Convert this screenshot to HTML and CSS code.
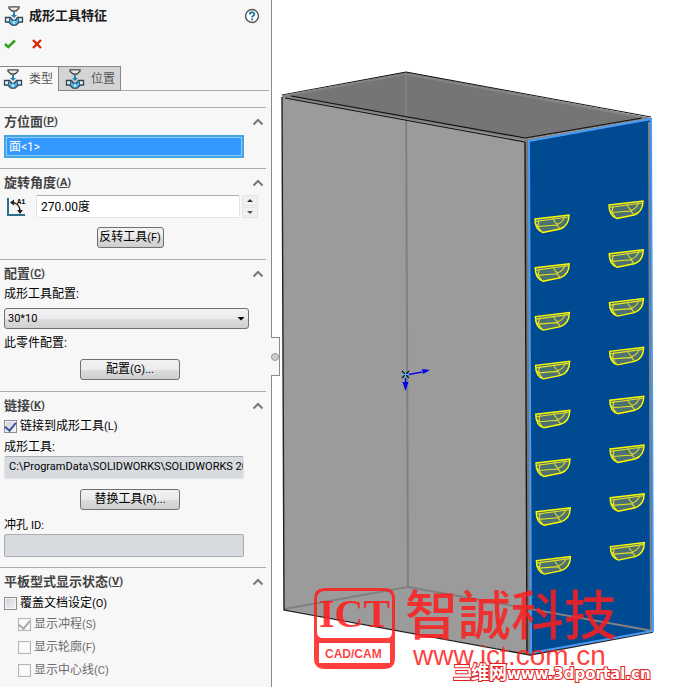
FILE: index.html
```
<!DOCTYPE html>
<html lang="zh-CN">

  <head>
    <meta charset="UTF-8" />
    <title>成形工具特征</title>

    <!-- CSS Styling -->
    <link rel="stylesheet" href="styles.css">
  </head>

  <body>

  <!-- Shared icons -->
  <svg class="defs" aria-hidden="true">
    <symbol id="form-tool" viewBox="0 0 20 20">
      <path d="M5 .8h10v1.400L12 5H8L5 2.200z" fill="#e8e8e8" stroke="#4a4a4a" stroke-width="1.300" />
      <path d="M9 6h2v3h2l-3 3-3-3h2z" fill="#2580ad" />
      <path d="M1.500 11.500h5l2.500 3h2l2.500-3h5v4.500h-3l-3.500 3h-4l-3.500-3h-3z" fill="#e4eef3" stroke="#34464f" stroke-width="1.300" />
      <path d="M5.500 12.500l3 2h3l3-2v3.500l-3 3h-3l-3-3z" fill="#5ab6e2" stroke="#1d6a92" />
      <path d="M9 15h2v3H9z" fill="#b9e2f6" />
    </symbol>
    <symbol id="chevron" viewBox="0 0 12 8">
      <path d="M1.500 6.500L6 2l4.500 4.500" fill="none" stroke="#777" stroke-width="2" />
    </symbol>
  </svg>

  <main class="app">
  <aside class="panel">
    <header class="title-row">
      <svg class="tool-icon"><use href="#form-tool" /></svg>
      <h1>成形工具特征</h1>
      <button class="icon-btn" type="button" aria-label="帮助">
        <svg width="16" height="16" viewBox="0 0 16 16">
          <circle cx="8" cy="8" r="6.500" fill="#fff" stroke="#555" stroke-width="1.400" />
          <path d="M5.800 6.500c0-3 4.500-2.800 4.500-.3 0 1.600-2.200 1.500-2.200 3.200M8.100 10.500v1.700" fill="none" stroke="#2378a5" stroke-width="1.900" />
        </svg>
      </button>
    </header>

    <div class="actions">
      <button class="icon-btn" type="button" aria-label="确定">
        <svg width="12" height="10" viewBox="0 0 12 10"><path d="M1 5l3.200 3L11 1.500" fill="none" stroke="#35a01f" stroke-width="2.500" /></svg>
      </button>
      <button class="icon-btn" type="button" aria-label="取消">
        <svg width="10" height="10" viewBox="0 0 10 10"><path d="M1 1l8 8M9 1L1 9" fill="none" stroke="#dc2000" stroke-width="2.300" /></svg>
      </button>
    </div>

    <nav class="tabs">
      <button class="tab active" type="button"><svg class="tool-icon"><use href="#form-tool" /></svg>类型</button>
      <button class="tab" type="button"><svg class="tool-icon"><use href="#form-tool" /></svg>位置</button>
    </nav>

    <!-- Placement face -->
    <section class="group face">
      <h2>方位面<span class="key">(<u>P</u>)</span><svg class="chevron"><use href="#chevron" /></svg></h2>
      <input class="field selected" type="text" value="面&lt;1&gt;" aria-label="方位面" readonly />
    </section>

    <!-- Rotation angle -->
    <section class="group angle">
      <h2>旋转角度<span class="key">(<u>A</u>)</span><svg class="chevron"><use href="#chevron" /></svg></h2>
      <div class="angle-row">
        <svg width="20" height="20" viewBox="0 0 20 20">
          <path d="M2 1v17h17" fill="none" stroke="#2c6f90" stroke-width="2" />
          <path d="M5 5.500c5 0 9 3 9 9" fill="none" stroke="#222" stroke-width="1.500" />
          <path d="M4 5.500l4-3v6zM14 17l-3-4h6z" fill="#222" />
          <text x="11" y="7" class="icon-text">A1</text>
        </svg>
        <input class="field" type="text" value="270.00度" aria-label="旋转角度" />
        <div class="spin">
          <button type="button" aria-label="增加"><svg width="6" height="3" viewBox="0 0 6 3"><path d="M0 3l3-3 3 3z" fill="#333" /></svg></button>
          <button type="button" aria-label="减少"><svg width="6" height="3" viewBox="0 0 6 3"><path d="M0 0l3 3 3-3z" fill="#555" /></svg></button>
        </div>
      </div>
      <button class="btn short" type="button">反转工具<span class="key">(F)</span></button>
    </section>

    <!-- Configuration -->
    <section class="group config">
      <h2>配置<span class="key">(<u>C</u>)</span><svg class="chevron"><use href="#chevron" /></svg></h2>
      <label for="toolConfig">成形工具配置:</label>
      <div class="select">
        <select id="toolConfig">
          <option>30*10</option>
        </select>
      </div>
      <p>此零件配置:</p>
      <button class="btn" type="button">配置<span class="key">(G)...</span></button>
    </section>

    <!-- Link -->
    <section class="group link">
      <h2>链接<span class="key">(<u>K</u>)</span><svg class="chevron"><use href="#chevron" /></svg></h2>
      <label class="check"><input type="checkbox" checked /><span>链接到成形工具<span class="key">(L)</span></span></label>
      <label for="toolPath">成形工具:</label>
      <input class="field gray" type="text" id="toolPath" value="C:\ProgramData\SOLIDWORKS\SOLIDWORKS 2016" readonly />
      <button class="btn" type="button">替换工具<span class="key">(R)...</span></button>
      <label for="punchId">冲孔 <span class="key">ID:</span></label>
      <input class="field gray framed" type="text" id="punchId" readonly />
    </section>

    <!-- Flat pattern display -->
    <section class="group display">
      <h2>平板型式显示状态<span class="key">(<u>V</u>)</span><svg class="chevron"><use href="#chevron" /></svg></h2>
      <label class="check"><input type="checkbox" /><span>覆盖文档设定<span class="key">(O)</span></span></label>
      <div class="sub-list">
        <label class="check"><input type="checkbox" checked disabled /><span>显示冲程<span class="key">(S)</span></span></label>
        <label class="check"><input type="checkbox" disabled /><span>显示轮廓<span class="key">(F)</span></span></label>
        <label class="check"><input type="checkbox" disabled /><span>显示中心线<span class="key">(C)</span></span></label>
      </div>
    </section>

    <button class="splitter" type="button" aria-label="折叠面板"></button>
  </aside>

  <section class="viewport">
    <svg class="model" viewBox="272 0 401 687">
      <defs>
        <g id="louver">
          <path d="M0 4L34 0C34 7 31 12 25 14L8 17.500C3 16 0 11 0 4z" fill="#4d7170" stroke="#ff0" stroke-width="1.400" />
          <path d="M0 6.500L33 2M4 5L3 11.500L22 10L25 14M3 11.500L7 17M0 8l3 3.500" fill="none" stroke="#e4e428" stroke-width="1.100" />
          <path d="M18 3q2 6 5 6q5-2 7-8M23 9l-1 1" fill="none" stroke="#d0d030" stroke-width="1.200" />
        </g>
      </defs>

      <!-- box faces -->
      <path d="M282 96L406 72L651 118L527 139z" fill="#757575" />
      <path d="M282 96L527 139L530 655L284 609z" fill="#9b9b9b" />
      <path d="M528 141L651 119L653 631L530 655z" fill="#004a91" />

      <!-- hidden edges -->
      <path d="M406 73L408 587L284 609M408 587L653 631" fill="none" stroke="#808080" stroke-width="2" />

      <!-- visible edges -->
      <path d="M282 95L406 72L651 117" fill="none" stroke="#111" />
      <path d="M283 96L406 74L650 119L527 140z" fill="none" stroke="#858585" stroke-width="2" />
      <path d="M291 96L525 138L642 118M285 98L525 142" fill="none" stroke="#111" stroke-width="1.200" />
      <path d="M282 97L284 610L530 655L653 632" fill="none" stroke="#222" stroke-width="1.400" />
      <path d="M527 140L529 654" stroke="#777" stroke-width="3" />
      <path d="M525 142L527 653" stroke="#151515" stroke-width="1.400" />
      <path d="M649 122L651 631" stroke="#7d8288" stroke-width="2" />
      <path d="M529 141L651 119L653 631L531 653z" fill="none" stroke="#489cf4" stroke-width="2" />

      <!-- louvers -->
      <g id="louvers"></g>

      <!-- origin -->
      <path d="M406 375L422 372M405.500 378v5" stroke="#0909e8" stroke-width="1.400" />
      <path d="M430 370l-8-1 1 5zM405.500 391l-3-9h6z" fill="#0000f0" />
      <path d="M402 371l7 7M409 371l-7 7" stroke="#111" stroke-width="1.200" />
      <path d="M405.500 371v7M402 374.500h7" stroke="#5ab8ff" />

      <!-- logo -->
      <g class="mark">
        <path d="M319 643h71v20h-71z" fill="#fff" fill-opacity="1" />
        <path fill-rule="evenodd" d="M325 588h59q11 0 11 11v59q0 11-11 11h-59q-11 0-11-11v-59q0-11 11-11zM325 591q-8 0-8 8v33q0 6 6 6h64q5 0 5-6v-33q0-8-8-8zM319 643v20h71v-20z" />
        <text x="319" y="627" class="logo-text">ICT</text>
        <text x="325" y="658" class="cad-text">CAD/CAM</text>
        <text x="405" y="635" class="brand-text">智誠科技</text>
        <text x="413" y="665" class="url-text">www.ict.com.cn</text>
      </g>
      <text x="453" y="679" class="portal-text"><tspan class="portal-name">三维网</tspan>www.3dportal.cn</text>
    </svg>
  </section>
  </main>

  <!-- JavaScript -->
  <script type="text/javascript">

    "use strict";

    // Draws two columns of eight louvers on the side face
    var group = document.getElementById("louvers");

    for(var i = 0; i < 8; i++)
    {
      addLouver(535 + i * 0.2, 215 + i * 48.8);
      addLouver(609 + i * 0.2, 201 + i * 48.8);
    }

    function addLouver(x, y)
    {
      var use = document.createElementNS("http://www.w3.org/2000/svg", "use");
      use.setAttribute("href", "#louver");
      use.setAttribute("x", x);
      use.setAttribute("y", y);
      group.appendChild(use);
    }

  </script>

  </body>
</html>
```

FILE: styles.css
```
* {
  box-sizing: border-box;
}

body {
  margin: 0;
  background: #FFFFFF;
  color: #000000;
  font-family: Roboto, "Noto Sans CJK SC", sans-serif;
  font-size: 12px;
  line-height: 16px;
}

button, input, select {
  margin: 0;
  color: inherit;
  font: inherit;
}

h1, h2, p {
  margin: 0;
}

.defs {
  display: block;
  width: 0;
  height: 0;
}

.app {
  display: flex;
  min-height: 100vh;
}

.panel {
  position: relative;
  flex: 0 0 272px;
  border-right: 1px solid #8A8A8A;
  background: #F7F7F7;
}

.viewport {
  flex: 1;
  min-width: 0;
}

.model {
  display: block;
  width: 100%;
}

.title-row {
  display: flex;
  align-items: center;
  height: 32px;
  padding: 0 11px 0 4px;
}

h1 {
  flex: 1;
  padding-left: 5px;
  color: #1A1A1A;
  font-size: 13px;
}

.tool-icon {
  width: 20px;
  height: 20px;
}

.icon-btn {
  display: flex;
  padding: 0;
  border: 0;
  background: none;
}

.actions {
  display: flex;
  align-items: center;
  gap: 16px;
  height: 24px;
  padding-left: 4px;
}

.tabs {
  display: flex;
  width: 269px;
  height: 25px;
  margin-top: 10px;
  border-bottom: 1px solid #AAAAAA;
}

.tab {
  display: flex;
  align-items: center;
  gap: 6px;
  height: 25px;
  padding: 0 5px 0 6px;
  border: 1px solid #888888;
  background: #D4D4D4;
  color: #555555;
}

.tab.active {
  padding-left: 3px;
  border-width: 1px 0 0;
  background: #F7F7F7;
}

.group {
  display: flex;
  flex-direction: column;
  width: 266px;
  padding: 6px 22px 0 4px;
  border-top: 1px solid #AAAAAA;
}

h2 {
  display: flex;
  align-items: center;
  height: 16px;
  margin-right: -20px;
  color: #444444;
  font-size: 13px;
}

.chevron {
  width: 12px;
  height: 8px;
  margin-left: auto;
}

.key {
  font-size: 11px;
}

.face {
  height: 61px;
  margin-top: 16px;
}

.angle {
  height: 91px;
}

.config {
  height: 132px;
}

.link {
  height: 176px;
}

.field {
  width: 240px;
  height: 23px;
  padding: 0 4px;
  border: 1px solid #E3E3E9;
  border-top-color: #ABADB3;
  border-radius: 2px;
  background: #FFFFFF;
}

.field.selected {
  margin-top: 5px;
  padding: 0 3px 2px;
  border: 2px solid #45A5DF;
  border-radius: 0;
  background: #3399FF;
  box-shadow: inset 0 0 0 1px #91C9F7;
  color: #FFFFFF;
}

.field.gray {
  padding-right: 0;
  padding-bottom: 2px;
  background: #D7DADF;
  font-size: 11px;
}

.field.framed {
  border: 1px solid #ABADB3;
}

.angle-row {
  display: flex;
  align-items: center;
  margin: 4px -20px 0 0;
  padding-left: 2px;
}

.angle-row .field {
  width: 204px;
  margin: 0 2px 0 10px;
  padding-bottom: 3px;
}

.icon-text {
  font: 700 7px "Liberation Mono", monospace;
}

.spin {
  display: grid;
  gap: 1px;
}

.spin button {
  display: flex;
  align-items: center;
  justify-content: center;
  width: 16px;
  height: 11px;
  padding: 0;
  border: 1px solid #E4E4E4;
  background: #F0F0F0;
}

.btn {
  align-self: center;
  width: 100px;
  height: 21px;
  margin-left: 12px;
  padding: 0;
  border: 1px solid #707070;
  border-radius: 3px;
  background: linear-gradient(#F2F2F2 0%, #EBEBEB 50%, #DDDDDD 51%, #CFCFCF 100%);
  line-height: 19px;
}

.btn.short {
  width: 67px;
  margin-top: 9px;
}

.select {
  display: grid;
  align-items: center;
  width: 245px;
  margin: 6px 0;
}

.select::after {
  grid-area: 1 / 1;
  justify-self: end;
  width: 8px;
  height: 4px;
  margin-right: 4px;
  background: #000000;
  clip-path: polygon(0 0, 100% 0, 50% 100%);
  content: "";
  pointer-events: none;
}

select {
  grid-area: 1 / 1;
  height: 21px;
  padding: 0 16px 0 3px;
  border: 1px solid #707070;
  border-radius: 3px;
  appearance: none;
  background: linear-gradient(#F2F2F2 0%, #EBEBEB 50%, #DDDDDD 51%, #CFCFCF 100%);
  font-size: 11px;
}

.check {
  display: flex;
  align-items: center;
  gap: 3px;
}

.check input {
  display: grid;
  place-items: center;
  width: 13px;
  height: 13px;
  border: 1px solid #8E8F8F;
  appearance: none;
  background: linear-gradient(135deg, #CBCFD5, #F6F6F6);
  box-shadow: inset 0 0 0 1px #F4F4F4;
}

.check input:checked::after {
  width: 5px;
  height: 9px;
  border: solid #3B52A0;
  border-width: 0 2px 2px 0;
  content: "";
  transform: translateY(-1px) rotate(40deg);
}

.check input:disabled {
  border-color: #B5B5B5;
  background: #FAFAFA;
}

.check input:disabled::after {
  border-color: #AAAAAA;
}

.config label, .link .check {
  margin-top: 4px;
}

.config .btn {
  margin-top: 8px;
}

.link label + label {
  margin-top: 4px;
}

.link .field {
  margin-top: 1px;
}

.link .btn {
  margin-top: 10px;
  margin-bottom: 7px;
}

.link .framed {
  margin-top: 0;
}

.display .check {
  margin-top: 5px;
}

.sub-list {
  display: grid;
  gap: 6px;
  padding: 4px 0 0 14px;
  color: #6D6D6D;
}

.sub-list .check {
  margin-top: 0;
}

.splitter {
  position: absolute;
  top: 337px;
  right: -9px;
  display: flex;
  align-items: center;
  width: 9px;
  height: 39px;
  padding: 0;
  border: 1px solid #8A8A8A;
  border-left: 0;
  background: #F7F7F7;
}

.splitter::before {
  width: 6px;
  height: 6px;
  border: 1px solid #999999;
  border-radius: 50%;
  background: #CCCCCC;
  content: "";
}

.mark {
  fill: #FF1C1C;
  fill-opacity: .85;
}

.logo-text {
  font: 700 40px "Liberation Serif", serif;
}

.cad-text {
  font: 700 12px "Liberation Sans", sans-serif;
}

.brand-text {
  font: 500 53px "Noto Sans CJK TC", sans-serif;
}

.url-text {
  font: 28px "Liberation Sans", sans-serif;
}

.portal-text {
  fill: #FFFFFF;
  stroke: #E02020;
  stroke-width: 2px;
  paint-order: stroke;
  font: 700 15px "DejaVu Sans", "Noto Sans CJK SC", sans-serif;
}

.portal-name {
  font-size: 18px;
}
```
